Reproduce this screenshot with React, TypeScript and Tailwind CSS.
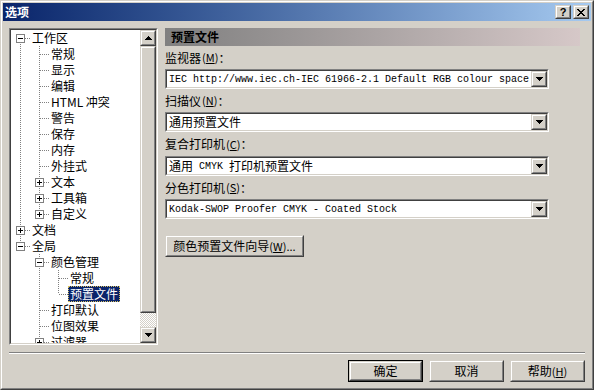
import React from "react";

const cjk = "font-['Noto_Sans_CJK_SC',sans-serif]";
const mono = "font-['Liberation_Mono',monospace]";

type Row = {
  label: string;
  depth: number;
  box?: "plus" | "minus";
  above: boolean;
  below: boolean;
  cont: number[];
  selected?: boolean;
};

const rows: Row[] = [
  { label: "工作区", depth: 0, box: "minus", above: false, below: true, cont: [] },
  { label: "常规", depth: 1, above: true, below: true, cont: [0] },
  { label: "显示", depth: 1, above: true, below: true, cont: [0] },
  { label: "编辑", depth: 1, above: true, below: true, cont: [0] },
  { label: "HTML 冲突", depth: 1, above: true, below: true, cont: [0] },
  { label: "警告", depth: 1, above: true, below: true, cont: [0] },
  { label: "保存", depth: 1, above: true, below: true, cont: [0] },
  { label: "内存", depth: 1, above: true, below: true, cont: [0] },
  { label: "外挂式", depth: 1, above: true, below: true, cont: [0] },
  { label: "文本", depth: 1, box: "plus", above: true, below: true, cont: [0] },
  { label: "工具箱", depth: 1, box: "plus", above: true, below: true, cont: [0] },
  { label: "自定义", depth: 1, box: "plus", above: true, below: false, cont: [0] },
  { label: "文档", depth: 0, box: "plus", above: true, below: true, cont: [] },
  { label: "全局", depth: 0, box: "minus", above: true, below: false, cont: [] },
  { label: "颜色管理", depth: 1, box: "minus", above: true, below: true, cont: [] },
  { label: "常规", depth: 2, above: true, below: true, cont: [1] },
  { label: "预置文件", depth: 2, above: true, below: false, cont: [1], selected: true },
  { label: "打印默认", depth: 1, above: true, below: true, cont: [] },
  { label: "位图效果", depth: 1, above: true, below: true, cont: [] },
  { label: "过滤器", depth: 1, box: "plus", above: true, below: true, cont: [] },
];

function Raised({ className = "", children }: { className?: string; children?: React.ReactNode }) {
  return (
    <div className={`border border-t-[#d4d0c8] border-l-[#d4d0c8] border-r-[#404040] border-b-[#404040] bg-[#d4d0c8] ${className}`}>
      <div className="w-full h-full border border-t-white border-l-white border-r-[#808080] border-b-[#808080] flex items-center justify-center">
        {children}
      </div>
    </div>
  );
}

function Sunken({ className = "", children }: { className?: string; children?: React.ReactNode }) {
  return (
    <div className={`border border-t-[#808080] border-l-[#808080] border-r-white border-b-white ${className}`}>
      <div className="w-full h-full border border-t-[#404040] border-l-[#404040] border-r-[#d4d0c8] border-b-[#d4d0c8] bg-white flex overflow-hidden">
        {children}
      </div>
    </div>
  );
}

function Arrow({ up = false }: { up?: boolean }) {
  return (
    <svg width="7" height="4" viewBox="0 0 7 4" shapeRendering="crispEdges">
      {up ? <polygon points="3.5,0 7,4 0,4" fill="#000" /> : <polygon points="0,0 7,0 3.5,4" fill="#000" />}
    </svg>
  );
}

function TreeLines({ row }: { row: Row }) {
  const p = 9 + 19 * row.depth;
  const w = p + 10;
  return (
    <svg width={w} height="16" className="shrink-0" shapeRendering="crispEdges">
      <g stroke="#808080" strokeWidth="1" strokeDasharray="1 1" fill="none">
        {row.cont.map((l) => (
          <line key={l} x1={9 + 19 * l + 0.5} y1="0" x2={9 + 19 * l + 0.5} y2="16" />
        ))}
        {row.above && <line x1={p + 0.5} y1="0" x2={p + 0.5} y2="8" />}
        {row.below && <line x1={p + 0.5} y1="8" x2={p + 0.5} y2="16" />}
        <line x1={p + 1} y1="8.5" x2={w} y2="8.5" />
      </g>
      {row.box && (
        <g>
          <rect x={p - 3.5} y="4.5" width="8" height="8" fill="#fff" stroke="#808080" />
          <line x1={p - 2} y1="8.5" x2={p + 3} y2="8.5" stroke="#000" />
          {row.box === "plus" && <line x1={p + 0.5} y1="6" x2={p + 0.5} y2="11" stroke="#000" />}
        </g>
      )}
    </svg>
  );
}

function Tree() {
  return (
    <Sunken className="w-[149px] h-[317px] shrink-0">
      <div className="w-[129px] h-full overflow-hidden">
        {rows.map((r, i) => (
          <div key={i} className="flex h-[16px] items-center">
            <TreeLines row={r} />
            <span
              className={`h-[16px] leading-[16px] px-[2px] text-[12px] whitespace-nowrap ${
                r.selected
                  ? "bg-[#0a246a] text-white outline-1 outline-dotted outline-[#d8c060] -outline-offset-1"
                  : "text-black"
              }`}
            >
              {r.label}
            </span>
          </div>
        ))}
      </div>
      <div className="w-[16px] h-full flex flex-col shrink-0">
        <Raised className="w-[16px] h-[16px]">
          <Arrow up />
        </Raised>
        <Raised className="w-[16px] h-[267px]" />
        <div className="w-[16px] h-[14px] bg-[repeating-conic-gradient(#d4d0c8_0%_25%,#ffffff_0%_50%)] bg-[length:2px_2px]" />
        <Raised className="w-[16px] h-[16px]">
          <Arrow />
        </Raised>
      </div>
    </Sunken>
  );
}

function Combo({ children }: { children: React.ReactNode }) {
  return (
    <Sunken className="w-[384px] h-[20px]">
      <div className="flex-1 flex items-center pl-[2px] text-[12px] whitespace-nowrap overflow-hidden">{children}</div>
      <Raised className="w-[16px] h-[16px] shrink-0">
        <Arrow />
      </Raised>
    </Sunken>
  );
}

function Label({ text, k, h }: { text: string; k: string; h: string }) {
  return (
    <div className={`${h} flex items-center text-[12px] text-black`}>
      {text}
      <span className="text-[11px] ml-[1px]">
        (<span className="underline">{k}</span>)
      </span>
      ：
    </div>
  );
}

export default function App() {
  return (
    <div className={`w-[594px] h-[390px] ${cjk} border border-t-[#d4d0c8] border-l-[#d4d0c8] border-r-[#404040] border-b-[#404040] bg-[#d4d0c8] overflow-hidden`}>
      <div className="w-full h-full border border-t-white border-l-white border-r-[#808080] border-b-[#808080] p-[1px] flex flex-col">
        {/* title bar */}
        <div className="h-[18px] shrink-0 bg-linear-to-r from-[#0a246a] to-[#a6caf0] flex items-center justify-between pl-[2px] pr-[2px]">
          <span className="text-white font-bold text-[12px] leading-[18px]">选项</span>
          <div className="flex gap-[2px]">
            <Raised className="w-[16px] h-[14px]">
              <span className="font-['Liberation_Sans',sans-serif] font-bold text-[11px] leading-none text-black">?</span>
            </Raised>
            <Raised className="w-[16px] h-[14px]">
              <svg width="8" height="7" viewBox="0 0 8 7" shapeRendering="crispEdges">
                <path d="M0 0h2v1h-2zM6 0h2v1h-2zM1 1h2v1h-2zM5 1h2v1h-2zM2 2h4v1h-4zM3 3h2v1h-2zM2 4h4v1h-4zM1 5h2v1h-2zM5 5h2v1h-2zM0 6h2v1h-2zM6 6h2v1h-2z" fill="#000" />
              </svg>
            </Raised>
          </div>
        </div>

        {/* body */}
        <div className="flex pl-[6px] pt-[7px] gap-[7px]">
          <Tree />
          <div className="w-[415px] flex flex-col">
            <div className="h-[18px] bg-linear-to-r from-[#808080] to-[#d6c8c8] flex items-center pl-[6px]">
              <span className="font-bold text-[12px] text-black">预置文件</span>
            </div>
            <Label text="监视器" k="M" h="h-[23px]" />
            <Combo>
              <span className={`${mono} text-[10px] text-black`}>
                IEC http://www.iec.ch-IEC 61966-2.1 Default RGB colour space
              </span>
            </Combo>
            <Label text="扫描仪" k="N" h="h-[23px]" />
            <Combo>
              <span className="text-black">通用预置文件</span>
            </Combo>
            <Label text="复合打印机" k="C" h="h-[24px]" />
            <Combo>
              <span className="text-black">通用</span>
              <span className={`${mono} text-[10px] text-black`}>&nbsp;CMYK&nbsp;</span>
              <span className="text-black">打印机预置文件</span>
            </Combo>
            <Label text="分色打印机" k="S" h="h-[23px]" />
            <Combo>
              <span className={`${mono} text-[10px] text-black`}>Kodak-SWOP Proofer CMYK - Coated Stock</span>
            </Combo>
            <div className="mt-[16px]">
              <Raised className="w-[139px] h-[22px]">
                <span className="text-[12px] text-black whitespace-nowrap">
                  颜色预置文件向导
                  <span className="text-[11px]">
                    (<span className="underline">W</span>)...
                  </span>
                </span>
              </Raised>
            </div>
          </div>
        </div>

        {/* separator */}
        <div className="ml-[6px] mt-[7px] w-[576px] border-t border-t-[#808080] border-b border-b-white" />

        {/* buttons */}
        <div className="flex justify-end gap-[6px] pr-[6px] mt-[6px]">
          <div className="border border-black">
            <Raised className="w-[73px] h-[20px]">
              <span className="text-[12px] text-black">确定</span>
            </Raised>
          </div>
          <Raised className="w-[75px] h-[22px]">
            <span className="text-[12px] text-black">取消</span>
          </Raised>
          <Raised className="w-[75px] h-[22px]">
            <span className="text-[12px] text-black">
              帮助
              <span className="text-[11px]">
                (<span className="underline">H</span>)
              </span>
            </span>
          </Raised>
        </div>
      </div>
    </div>
  );
}
